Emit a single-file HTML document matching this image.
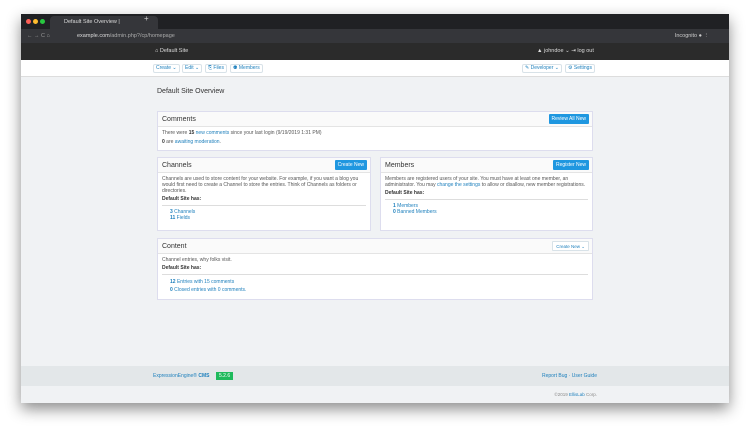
<!DOCTYPE html>
<html><head><style>
*{margin:0;padding:0;box-sizing:border-box}
body{width:750px;height:431px;background:#fff;font-family:"Liberation Sans",sans-serif;position:relative;overflow:hidden}
.win{position:absolute;left:21px;top:14px;width:708px;height:389px;background:#f0f2f4;box-shadow:0 6px 14px rgba(0,0,0,.45);overflow:hidden}
.tabs{height:15px;background:#202124;position:relative}
.dot{position:absolute;top:5px;width:5px;height:5px;border-radius:50%}
.tab{position:absolute;left:29px;top:2px;width:108px;height:13px;background:#35363a;border-radius:4px 4px 0 0;color:#ddd;font-size:5.5px;line-height:13px;padding-left:14px}
.addr{height:14px;background:#35363a;position:relative;color:#aaa;font-size:5.5px;line-height:14px}
.ee{height:17px;background:#2b2b2b;position:relative;color:#ddd;font-size:5.5px;line-height:17px}
.tool{height:17px;background:#fff;border-bottom:1px solid #ddd;position:relative}
.btn{position:absolute;top:4px;height:9px;border:1px solid #d8e2e8;border-radius:2px;font-size:5px;line-height:7px;color:#1f80bd;padding:0 2px;background:#fff}
h1{position:absolute;left:136px;top:74px;font-size:7px;font-weight:normal;color:#333}
.box{position:absolute;background:#fff;border:1px solid #dde;font-size:5px;color:#555}
.hd{height:15px;border-bottom:1px solid #e4e4e4;background:#fafafa;font-size:7px;color:#333;line-height:15px;padding-left:4px;position:relative}
.bb{position:absolute;right:3px;top:2px;height:10px;background:#1f97e0;color:#fff;font-size:5px;line-height:10px;padding:0 3px;border-radius:1px}
.bd{padding:3px 4px;line-height:6px}
a,.l{color:#1f80bd}
b{color:#333}
hr{border:0;border-top:1px solid #ddd;margin:3px 0}
.foot{position:absolute;left:0;top:352px;width:708px;height:20px;background:#e3e7e9;font-size:5px;color:#1f80bd;line-height:20px}
</style></head><body>
<div class="win">
<div class="tabs">
<div class="dot" style="left:5px;background:#fe5f57"></div><div class="dot" style="left:12px;background:#febc2e"></div><div class="dot" style="left:19px;background:#28c840"></div>
<div class="tab">Default Site Overview | ExpressionEngine ×</div>
<span style="position:absolute;left:123px;top:0;color:#ccc;font-size:8px">+</span>
</div>
<div class="addr"><span style="margin-left:6px;color:#999">←  →  C  ⌂</span><span style="position:absolute;left:56px"><span style="color:#ddd">example.com</span>/admin.php?/cp/homepage</span><span style="position:absolute;right:20px;color:#ccc">Incognito ●  ⋮</span></div>
<div class="ee"><span style="position:absolute;left:134px">⌂  Default Site</span><span style="position:absolute;left:516px">▲ johndoe ⌄   ⇥ log out</span></div>
<div class="tool">
<div class="btn" style="left:132px">Create ⌄</div>
<div class="btn" style="left:161px">Edit ⌄</div>
<div class="btn" style="left:184px">⎘ Files</div>
<div class="btn" style="left:209px">⚉ Members</div>
<div class="btn" style="left:501px">✎ Developer ⌄</div>
<div class="btn" style="left:544px">⚙ Settings</div>
</div>
<h1>Default Site Overview</h1>
<div class="box" style="left:136px;top:97px;width:436px;height:40px"><div class="hd">Comments<span class="bb">Review All New</span></div>
<div class="bd">There were <b>15</b> <a>new comments</a> since your last login (9/19/2019 1:31 PM)<br><div style="margin-top:3px"><b>0</b> are <a>awaiting moderation</a>.</div></div></div>
<div class="box" style="left:136px;top:143px;width:214px;height:74px"><div class="hd">Channels<span class="bb">Create New</span></div>
<div class="bd">Channels are used to store content for your website. For example, if you want a blog you would first need to create a Channel to store the entries. Think of Channels as folders or directories.<div style="margin-top:2px"><b>Default Site has:</b></div><hr><div class="l" style="padding-left:8px"><b style="color:#1f80bd">3</b> Channels<br><b style="color:#1f80bd">11</b> Fields</div></div></div>
<div class="box" style="left:359px;top:143px;width:213px;height:74px"><div class="hd">Members<span class="bb">Register New</span></div>
<div class="bd">Members are registered users of your site. You must have at least one member, an administrator. You may <a>change the settings</a> to allow or disallow, new member registrations.<div style="margin-top:2px"><b>Default Site has:</b></div><hr><div class="l" style="padding-left:8px"><b style="color:#1f80bd">1</b> Members<br><b style="color:#1f80bd">0</b> Banned Members</div></div></div>
<div class="box" style="left:136px;top:224px;width:436px;height:62px"><div class="hd">Content<span class="bb" style="background:#fff;color:#1f80bd;border:1px solid #d8e2e8;font-size:4.5px">Create New ⌄</span></div>
<div class="bd">Channel entries, why folks visit.<div style="margin-top:2px"><b>Default Site has:</b></div><hr><div class="l" style="padding-left:8px;line-height:8px"><b style="color:#1f80bd">12</b> Entries with 15 comments<br><b style="color:#1f80bd">0</b> Closed entries with 0 comments.</div></div></div>
<div class="foot"><span style="margin-left:132px">ExpressionEngine® <b style="color:#1f80bd">CMS</b></span><span style="position:absolute;left:195px;top:6px;height:8px;line-height:8px;background:#1fba5c;color:#fff;padding:0 3px">5.2.6</span><span style="position:absolute;right:132px">Report Bug · User Guide</span></div>
<div style="position:absolute;right:132px;top:378px;font-size:4.5px;color:#888">©2019 <span class="l">EllisLab</span> Corp.</div>
</div>
</body></html>
